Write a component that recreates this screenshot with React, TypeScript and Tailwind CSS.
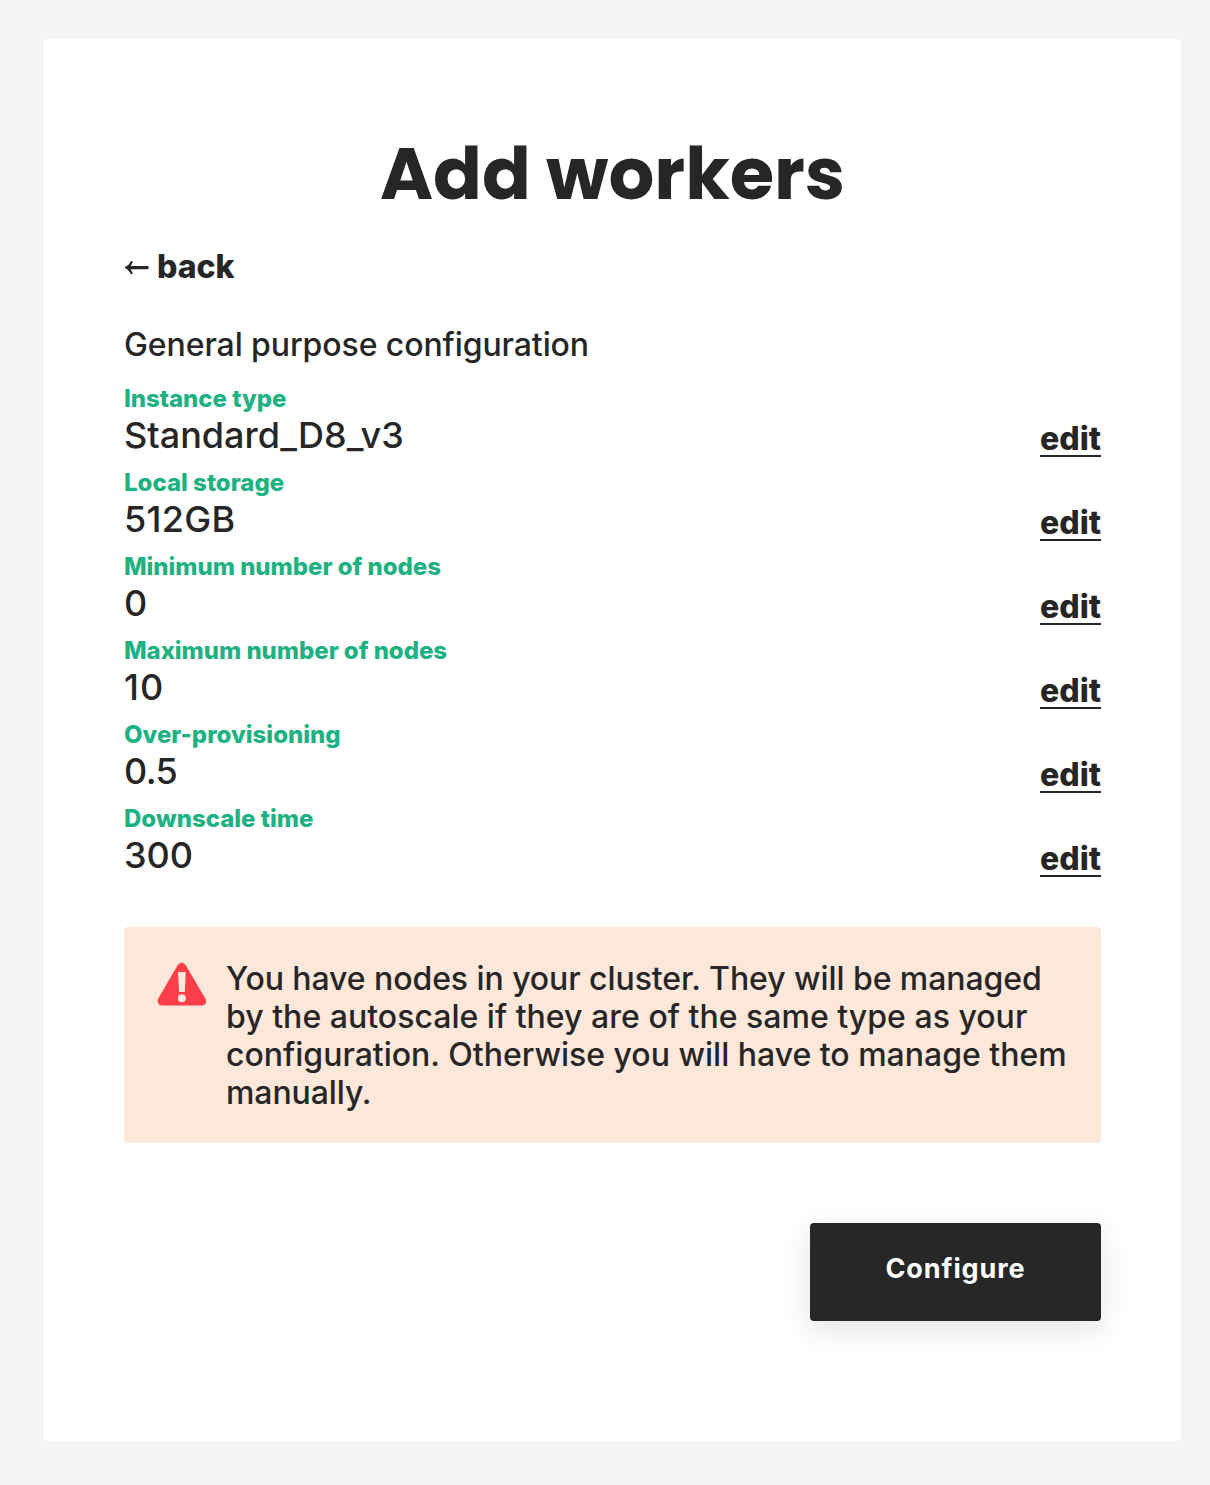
const rows = [
  { label: 'Instance type', value: 'Standard_D8_v3', labelClass: 'tracking-[-0.03px]', valueClass: '' },
  { label: 'Local storage', value: '512GB', labelClass: '', valueClass: 'tracking-[0.3px]' },
  { label: 'Minimum number of nodes', value: '0', labelClass: 'tracking-[-0.04px]', valueClass: '' },
  { label: 'Maximum number of nodes', value: '10', labelClass: 'tracking-[-0.05px]', valueClass: 'tracking-[1px]' },
  { label: 'Over-provisioning', value: '0.5', labelClass: '', valueClass: 'tracking-[-0.6px]' },
  { label: 'Downscale time', value: '300', labelClass: '', valueClass: '' },
];

export default function App() {
  return (
    <div className="h-[1485px] bg-[#f4f4f4] pt-[39px] pl-[44px] font-[Inter,sans-serif] text-[#262626]">
      <main className="flex h-[1402px] w-[1137px] flex-col rounded-[4px] bg-white px-20 pt-[95px]">
        <h1 className="text-center font-[Poppins,Inter,sans-serif] text-[72px] leading-[80px] font-bold">Add workers</h1>
        <a className="mt-[33px] flex h-[40px] items-center gap-2 text-[32px] leading-[40px] font-extrabold">
          <svg className="h-[20px] w-[25px]" viewBox="0 0 25 20" fill="currentColor">
            <path d="M0.5 10.6Q5.3 8 7.2 4L8.9 4.5Q7.9 7.3 6.6 9H24.5V12.2H6.6Q7.9 14 8.9 16.8L7.2 17.3Q5.3 13.2 0.5 10.6Z" />
          </svg>
          <span>back</span>
        </a>
        <p className="mt-[38px] text-[32px] leading-[40px] font-medium tracking-[-0.09px]">General purpose configuration</p>
        <div className="mt-[19px]">
          {rows.map(({ label, value, labelClass, valueClass }) => (
            <div key={label} className="flex h-[84px] items-start justify-between">
              <div>
                <div className={`text-[24px] leading-[30px] font-extrabold text-[#1eb182] ${labelClass}`}>{label}</div>
                <div className={`-mt-px text-[36px] leading-[44px] font-medium ${valueClass}`}>{value}</div>
              </div>
              <a className="mt-[38px] h-[35px] border-b-2 border-[#262626] text-[32px] leading-[34px] font-extrabold">edit</a>
            </div>
          ))}
        </div>
        <div className="mt-[39px] flex h-[216px] shrink-0 rounded-[4px] bg-[#ffe7da] pt-[33px] pl-[33px]">
          <svg className="mt-[2px] h-[44px] w-[50px] shrink-0" viewBox="0 0 50 44">
            <path fill="#fb3e48" d="M20.8 3Q24.5-2 28.6 3L48.3 36.5Q50.8 43 44.8 43.5H5.5Q-1 43 1.3 36.5Z" />
            <path fill="#ffe7da" d="M21 10H28.8L27.8 30H22Z" />
            <circle cx="24.9" cy="36.3" r="4" fill="#ffe7da" />
          </svg>
          <p className="ml-[19px] text-[32px] leading-[38px] font-medium">
            <span className="tracking-[-0.07px]">You have nodes in your cluster. They will be managed</span>
            <br />
            <span className="tracking-[0.02px]">by the autoscale if they are of the same type as your</span>
            <br />
            <span>configuration. Otherwise you will have to manage them</span>
            <br />
            <span className="tracking-[-0.1px]">manually.</span>
          </p>
        </div>
        <button className="mt-20 h-[98px] w-[291px] self-end rounded-[4px] bg-[#272727] pb-[6px] text-[27px] font-bold tracking-[0.9px] text-white shadow-[0_8px_28px_rgba(38,60,80,0.14)]">Configure</button>
      </main>
    </div>
  );
}
